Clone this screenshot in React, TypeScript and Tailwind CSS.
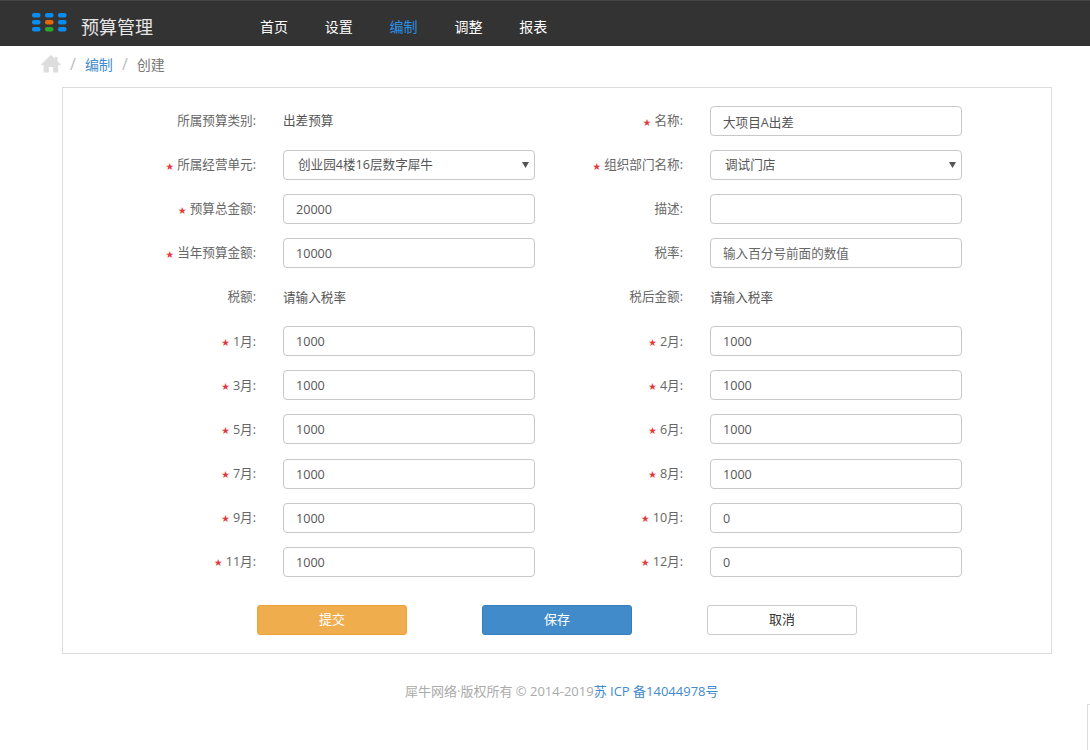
const navItems = ['首页', '设置', '编制', '调整', '报表'];

type Field = {
  label: string;
  required?: boolean;
  value?: string;
  placeholder?: string;
  text?: string;
  options?: boolean;
};

const fields: Field[] = [
  { label: '所属预算类别:', text: '出差预算' },
  { label: '名称:', required: true, value: '大项目A出差' },
  { label: '所属经营单元:', required: true, value: '创业园4楼16层数字犀牛', options: true },
  { label: '组织部门名称:', required: true, value: '调试门店', options: true },
  { label: '预算总金额:', required: true, value: '20000' },
  { label: '描述:', value: '' },
  { label: '当年预算金额:', required: true, value: '10000' },
  { label: '税率:', placeholder: '输入百分号前面的数值' },
  { label: '税额:', text: '请输入税率' },
  { label: '税后金额:', text: '请输入税率' },
  { label: '1月:', required: true, value: '1000' },
  { label: '2月:', required: true, value: '1000' },
  { label: '3月:', required: true, value: '1000' },
  { label: '4月:', required: true, value: '1000' },
  { label: '5月:', required: true, value: '1000' },
  { label: '6月:', required: true, value: '1000' },
  { label: '7月:', required: true, value: '1000' },
  { label: '8月:', required: true, value: '1000' },
  { label: '9月:', required: true, value: '1000' },
  { label: '10月:', required: true, value: '0' },
  { label: '11月:', required: true, value: '1000' },
  { label: '12月:', required: true, value: '0' },
];

function Logo() {
  const colors = ['#0a8cf0', '#0a8cf0', '#0a8cf0', '#0a8cf0', '#e8650f', '#0a8cf0', '#0a8cf0', '#2ea32e', '#0a8cf0'];
  return (
    <svg width="35" height="19" viewBox="0 0 35 19" className="block">
      {colors.map((c, i) => (
        <rect key={i} x={(i % 3) * 13} y={Math.floor(i / 3) * 7} width="8.5" height="4.5" rx="2" fill={c} />
      ))}
    </svg>
  );
}

function HomeIcon() {
  return (
    <svg width="20" height="18" viewBox="0 0 20 18" className="block">
      <path d="M9.8 0L14 3.8V2H16.5V6.2L19.8 9.4L18.8 10.2H17.2V17.5H12V12H7.8V17.5H2.6V10.2H1L0 9.4Z" fill="#ddd" />
    </svg>
  );
}

function FormField({ field }: { field: Field }) {
  const { label, required, value, placeholder, text, options } = field;
  return (
    <div className="flex items-center h-[30.1px]">
      <div className="flex-1 pt-[1.4px] flex items-center justify-end whitespace-nowrap text-[12.6px] text-[#666]">
        {required && <span className="text-[8px] text-[#e4393c] mr-[3.5px] leading-none">★</span>}
        {label}
      </div>
      <div className="ml-[27px] w-[252px] shrink-0 text-[12.6px] text-[#555]">
        {text ? (
          <span className="relative top-[0.9px]">{text}</span>
        ) : options ? (
          <div className="relative">
            <select className="block w-full h-[30px] pl-[14px] pt-[1px] appearance-none bg-white border border-[#c8c8c8] rounded-[4px] text-[12.6px] text-[#555]">
              <option>{value}</option>
            </select>
            <svg width="7" height="6" viewBox="0 0 7 6" className="absolute right-[6px] top-[12px]">
              <path d="M0 0H7L3.5 6Z" fill="#555" />
            </svg>
          </div>
        ) : (
          <input
            readOnly
            value={value ?? ''}
            placeholder={placeholder}
            className="block w-full h-[30px] px-3 pt-[1px] bg-white border border-[#c8c8c8] rounded-[4px] text-[12.6px] text-[#555] placeholder:text-[#666] outline-none"
          />
        )}
      </div>
    </div>
  );
}

export default function App() {
  return (
    <div className="relative h-[750px] bg-white overflow-hidden font-['Open_Sans','Noto_Sans_CJK_SC',sans-serif]">
      {/* Header */}
      <header className="h-[46px] bg-[#333] border-t border-[#444] flex items-center">
        <div className="ml-[32px] self-start mt-[12px]">
          <Logo />
        </div>
        <div className="ml-[14px] mt-[7px] text-[18px] text-[#e6e6e6] leading-none">预算管理</div>
        <nav className="ml-[107px] flex items-center gap-[36.8px] mt-[7px]">
          {navItems.map((item) => (
            <a key={item} className={`text-[14px] leading-none ${item === '编制' ? 'text-[#2a8fe8]' : 'text-white'}`}>
              {item}
            </a>
          ))}
        </nav>
      </header>

      {/* Breadcrumb */}
      <div className="h-[41px] pl-[41px] pb-[5px] flex items-center text-[14px]">
        <HomeIcon />
        <span className="ml-[9px] text-[16px] text-[#bbb]">/</span>
        <a className="ml-[9px] text-[#428bca]">编制</a>
        <span className="ml-[9px] text-[16px] text-[#bbb]">/</span>
        <span className="ml-[9px] text-[#777]">创建</span>
      </div>

      {/* Form card */}
      <main className="ml-[62px] w-[990px] h-[567px] border border-[#ddd] pt-[17.78px]">
        <div className="grid grid-cols-[458px_427px] gap-y-[14px] ml-[14px]">
          {fields.map((f) => (
            <FormField key={f.label} field={f} />
          ))}
        </div>
        <div className="mt-[28.2px] ml-[194px] flex gap-[75px] text-[13px]">
          <button className="w-[150px] h-[30px] rounded-[3px] bg-[#f0ad4e] border border-[#eea236] text-white">提交</button>
          <button className="w-[150px] h-[30px] rounded-[3px] bg-[#428bca] border border-[#357ebd] text-white">保存</button>
          <button className="w-[150px] h-[30px] rounded-[3px] bg-white border border-[#ccc] text-[#333]">取消</button>
        </div>
      </main>

      {/* Footer */}
      <footer className="mt-[27px] ml-[405px] text-[13px] text-[#aaa] leading-5 whitespace-nowrap">
        犀牛网络·版权所有 © 2014-2019<a className="text-[#428bca]">苏 ICP 备14044978号</a>
      </footer>

      {/* Clipped element at the window's corner */}
      <div className="absolute left-[1087px] top-[704px] w-[3px] h-[46px] border-l border-t border-[#ddd]" />
    </div>
  );
}
